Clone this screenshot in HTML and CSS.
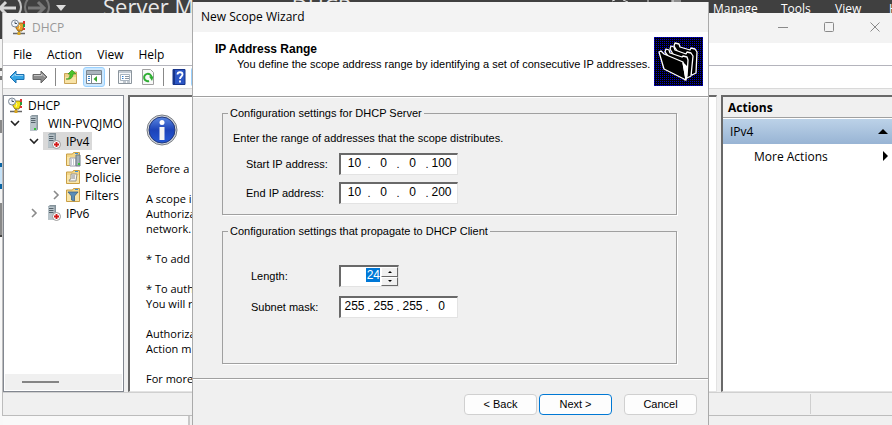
FILE: index.html
```
<!DOCTYPE html>
<html lang="en">
<head>
<meta charset="utf-8">
<title>New Scope Wizard</title>
<link rel="stylesheet" href="styles.css">
</head>
<body>
<svg class="defs" aria-hidden="true">
  <symbol id="dhcp" viewBox="0 0 16 16"><path d="M2 14.5h12M8 12v2" stroke="#666" stroke-width="1.4"/><path d="M4 4h8l1 3-2 5H7l-2-3z" fill="var(--tone)" stroke="#7a5a10" stroke-width=".8"/><path d="M7 5l2 2-1 3" stroke="#fff3a0" fill="none"/><path d="M12 2h2v3h-2zM12 9h2v2h-2z" fill="#d33"/><path d="M12 5h2v3h-2z" fill="#2a9a3a"/><rect x="6.500" y="13" width="3" height="3" fill="#d8a520"/><circle cx="4" cy="4.500" r="3.500" fill="#f2f6fb" stroke="#7b8794"/><path d="M4 2.500v2h2" stroke="#345" fill="none" stroke-width=".9"/></symbol>
  <symbol id="server" viewBox="0 0 16 16"><path d="M4 1.500L6 0h6v14.500L10 16H4z" fill="#8a979f"/><path d="M4 1.500h6.500V16H4z" fill="#b9c4ca"/><path d="M5 3.500h4.500M5 5.500h4.500M5 7.500h4.500" stroke="#55636c"/><path d="M8 13h2v2H8z" fill="#35c23a"/></symbol>
  <symbol id="serverred" viewBox="0 0 16 16"><path d="M2 1.500L4 0h6v13l-2 1.500H2z" fill="#84929a"/><path d="M2 1.500h6.500v13H2z" fill="#b9c4ca"/><path d="M3 3.500h4.500M3 5.500h4.500M3 7.500h4.500" stroke="#55636c"/><circle cx="10.500" cy="11.500" r="4" fill="#fff" stroke="#999"/><path d="M10.500 9v5M8 11.500h5" stroke="#d01818" stroke-width="1.800"/></symbol>
  <symbol id="folder" viewBox="0 0 16 16"><path d="M1.500 3h6l1-1.500h6v13h-13z" fill="#f3d689" stroke="#c99f45"/><path d="M2 6h12v8H2z" fill="#f9e5a8"/><path d="M10 2.500h3" stroke="#3c8fd8"/></symbol>
  <symbol id="chev" viewBox="0 0 10 10"><path d="M1 3l4 4 4-4" fill="none" stroke="currentColor" stroke-width="1.600"/></symbol>
  <symbol id="arrow" viewBox="0 0 16 14"><path d="M1 7l6-6v3.500h8v5H7V13z" fill="currentColor" stroke="var(--edge)"/><path d="M3 7l3.500-3v1.500H14" stroke="#fff" stroke-opacity=".5" fill="none"/></symbol>
</svg>

<div class="desktop">
  <header class="manager">
    <svg class="nav" viewBox="0 0 70 13" aria-hidden="true"><g fill="none" stroke-width="2"><circle cx="9" cy="7" r="12" stroke="#c8c8c8"/><path d="M16 8H1M6 2L0 8l6 6" stroke="#d8d8d8" stroke-width="3"/><circle cx="37" cy="7" r="12" stroke="#777"/><path d="M28 8h16M38 2l6 6-6 6" stroke="#777" stroke-width="3"/></g><path d="M56 5h10l-5 6z" fill="#ddd"/></svg>
    <div class="crumbs"><span>Server Manager</span><span>•</span><span>DHCP</span></div>
    <svg class="tools" viewBox="0 0 72 3" aria-hidden="true"><path d="M1 1l3-1M12 0l5 2M37 0v2M60 1h10M62 0v2" stroke="#ddd" fill="none"/></svg>
    <nav class="manager-menu"><a href="#">Manage</a><a href="#">Tools</a><a href="#">View</a><a href="#">Help</a></nav>
  </header>
  <div class="strip"></div>

  <section class="console">
    <header class="titlebar">
      <svg class="i16 amber"><use href="#dhcp"/></svg><span>DHCP</span>
      <svg class="winbtns" viewBox="0 0 104 12" aria-hidden="true"><path d="M1 6.500h10M93.500 1.500l9 9M102.500 1.500l-9 9" stroke="#8a8a8a" fill="none"/><rect x="47.500" y="1.500" width="9" height="9" rx="1" fill="none" stroke="#8a8a8a"/></svg>
    </header>
    <nav class="menubar"><a href="#">File</a><a href="#">Action</a><a href="#">View</a><a href="#">Help</a></nav>
    <div class="toolbar">
      <button aria-label="Back" class="blue"><svg class="i16"><use href="#arrow"/></svg></button>
      <button aria-label="Forward" class="gray"><svg class="i16 flip"><use href="#arrow"/></svg></button>
      <i class="sep"></i>
      <button aria-label="Up one level"><svg class="i16" viewBox="0 0 16 16"><path d="M1.500 4.500h5l1-1.500h6v11.500h-12z" fill="#eed187" stroke="#c9a458"/><path d="M2 8h11v6H2z" fill="#f8e3a6"/><path d="M3 10c3 0 4-2 4-5H5l4-4 4 4h-3c0 4-3 6-7 5z" fill="#4cc32a" stroke="#2f8f1a" stroke-width=".6"/></svg></button>
      <button aria-label="Show or hide console tree" class="on"><svg class="i16" viewBox="0 0 16 16"><path d="M.5 1.500h15v13H.5z" fill="#fff" stroke="#7c8790"/><path d="M1 2h14v3H1z" fill="#aab4bd"/><path d="M5.500 5v9M1 5.500h14" stroke="#7c8790"/><path d="M2 7.500h2M2 9.500h2M2 11.500h2" stroke="#3b7fc4"/><path d="M11 7v6L7.500 10z" fill="#36a52c"/></svg></button>
      <i class="sep"></i>
      <button aria-label="Properties"><svg class="i16" viewBox="0 0 16 16"><path d="M1.500 1.500h13v13h-13z" fill="#f7f9fb" stroke="#8b949c"/><path d="M2 2h12v2H2z" fill="#c3cbd3"/><path d="M3.500 5.500h9v6h-9z" fill="#fff" stroke="#a9b4bf"/><path d="M5 7.500h1.500M5 9.500h1.500" stroke="#2d7fd0"/><path d="M8 7.500h4M8 9.500h4M6 13h3M10 13h3" stroke="#8995a1"/></svg></button>
      <button aria-label="Refresh"><svg class="i16" viewBox="0 0 16 16"><path d="M2.500.5h8l3 3v12h-11z" fill="#f8f8f8" stroke="#a0a0a0"/><path d="M11.500 8A3.700 3.700 0 1 0 9 12" fill="none" stroke="#2fae33" stroke-width="2"/><path d="M9 7.500h4.500L12 12z" fill="#2fae33"/></svg></button>
      <i class="sep"></i>
      <button aria-label="Help"><svg class="i16" viewBox="0 0 16 16"><path d="M2 .5h12v15H2z" fill="#2b55c4" stroke="#17348a"/><path d="M2 1h2v14H2z" fill="#17348a"/><path d="M6.500 5.500c0-3 5-3 5 0 0 2-2.500 2-2.500 4.500M9 11.500v2" fill="none" stroke="#fff" stroke-width="1.800"/></svg></button>
      <button aria-label="Action pane" class="on"></button>
    </div>
    <div class="panes">
      <aside class="tree">
        <ul>
          <li><svg class="i16 yellow"><use href="#dhcp"/></svg><span>DHCP</span></li>
          <li class="l1"><svg class="chev"><use href="#chev"/></svg><svg class="i16"><use href="#server"/></svg><span>WIN-PVQJMO</span></li>
          <li class="l2"><svg class="chev"><use href="#chev"/></svg><b class="sel"><svg class="i16"><use href="#serverred"/></svg><span>IPv4</span></b></li>
          <li class="l3"><svg class="i16" viewBox="0 0 16 16"><use href="#folder"/><path d="M5 7h6v8H5z" fill="#fff" stroke="#99a"/><path d="M6 9h4M6 11h4M6 13h4" stroke="#8a97a5" stroke-dasharray="1"/><path d="M11 4h4v11h-4z" fill="#a3b0b8" stroke="#6c7a83"/><path d="M13 12h2v2h-2z" fill="#35c23a"/></svg><span>Server</span></li>
          <li class="l3"><svg class="i16" viewBox="0 0 16 16"><use href="#folder"/><path d="M6 5h6l-1 7H4l1-2h1z" fill="#f4f4f4" stroke="#97938a"/><path d="M7 7h3M7 9h3" stroke="#888"/></svg><span>Policie</span></li>
          <li class="l3 open"><svg class="chev shut"><use href="#chev"/></svg><svg class="i16" viewBox="0 0 16 16"><use href="#folder"/><path d="M3 5h10L9.500 9v5l-3-1V9z" fill="#5b8db8" stroke="#3b6288" stroke-width=".8"/></svg><span>Filters</span></li>
          <li class="l2"><svg class="chev shut"><use href="#chev"/></svg><b><svg class="i16"><use href="#serverred"/></svg><span>IPv6</span></b></li>
        </ul>
        <div class="scroll"><i></i></div>
      </aside>
      <main class="info">
        <svg class="badge" viewBox="0 0 32 32"><defs><linearGradient id="g" x2="0" y2="1"><stop stop-color="#5a86e0"/><stop offset=".5" stop-color="#1c43b8"/><stop offset="1" stop-color="#2559d6"/></linearGradient></defs><circle cx="16" cy="16" r="15" fill="#d5d8dc" stroke="#777b82"/><circle cx="16" cy="16" r="13" fill="url(#g)" stroke="#23387a"/><circle cx="16" cy="8.500" r="2.500" fill="#fff"/><path d="M13.500 13h5v13h-5z" fill="#f4f4f4"/></svg>
        <p>Before a</p>
        <p>A scope i<br>Authoriza<br>network.</p>
        <p>* To add</p>
        <p>* To auth<br>You will r</p>
        <p>Authoriza<br>Action m</p>
        <p>For more</p>
      </main>
      <aside class="actions">
        <h2>Actions</h2>
        <div class="group"><span>IPv4</span><svg viewBox="0 0 10 5"><path d="M0 5l5-5 5 5z"/></svg></div>
        <a class="more" href="#"><span>More Actions</span><svg viewBox="0 0 5 10"><path d="M0 0l5 5-5 5z"/></svg></a>
      </aside>
    </div>
    <footer class="status"><i></i></footer>
  </section>

  <form class="wizard">
    <header class="caption">New Scope Wizard</header>
    <div class="banner">
      <div><h1>IP Address Range</h1><p>You define the scope address range by identifying a set of consecutive IP addresses.</p></div>
      <svg viewBox="0 0 49 49" aria-hidden="true"><defs><pattern id="dots" width="2" height="2" patternUnits="userSpaceOnUse"><path d="M0 0h2v2H0z" fill="#000"/><path d="M0 0h1v1H0z" fill="#0000c8"/></pattern></defs><path d="M0 0h49v49H0z" fill="url(#dots)"/><path d="M.5.500h48v48H.5z" fill="none" stroke="#0000c0" stroke-dasharray="1"/><g fill="#000" stroke="#fff" stroke-width="1.300" stroke-linejoin="round"><path d="M20 9l1-3 4 1 1 3 10 3 1-2 4 1 2 3-1 21-4 2z"/><path d="M16 12l1-3 3 1 1 3 11 4 1-2 4 1 2 3-2 20-4 2z"/><path d="M11 15l1-3 3 1 1 3 12 4 1-1 4 1 1 3-1 16-2 4z"/><path d="M5 15l2-1 3 3 19 8 3 18-22-11z"/><path d="M29 26l4 4-1 12z" fill="#fff"/></g></svg>
    </div>
    <div class="fields">
      <fieldset class="range">
        <legend>Configuration settings for DHCP Server</legend>
        <p>Enter the range of addresses that the scope distributes.</p>
        <div class="row"><label for="s1">Start IP address:</label><div class="ip"><input id="s1" value="10"><i>.</i><input aria-label="Start octet 2" value="0"><i>.</i><input aria-label="Start octet 3" value="0"><i>.</i><input aria-label="Start octet 4" value="100"></div></div>
        <div class="row"><label for="e1">End IP address:</label><div class="ip"><input id="e1" value="10"><i>.</i><input aria-label="End octet 2" value="0"><i>.</i><input aria-label="End octet 3" value="0"><i>.</i><input aria-label="End octet 4" value="200"></div></div>
      </fieldset>
      <fieldset class="client">
        <legend>Configuration settings that propagate to DHCP Client</legend>
        <div class="row"><label for="len">Length:</label><div class="spin"><input id="len" value="24"><div class="steps"><button type="button" aria-label="Increase"><svg viewBox="0 0 4 2"><path d="M0 2l2-2 2 2z"/></svg></button><button type="button" aria-label="Decrease"><svg viewBox="0 0 4 2"><path d="M0 0l2 2 2-2z"/></svg></button></div></div></div>
        <div class="row"><label for="m1">Subnet mask:</label><div class="ip"><input id="m1" value="255"><i>.</i><input aria-label="Mask octet 2" value="255"><i>.</i><input aria-label="Mask octet 3" value="255"><i>.</i><input aria-label="Mask octet 4" value="0"></div></div>
      </fieldset>
    </div>
    <footer class="buttons"><button type="button">&lt; Back</button><button type="button" class="primary">Next &gt;</button><button type="button" class="cancel">Cancel</button></footer>
  </form>
</div>
</body>
</html>
```
FILE: styles.css
```
* { box-sizing: border-box; }
body { margin: 0; font: 12px/15px "Open Sans", "Noto Sans", sans-serif; color: #000; overflow: hidden; }
p, h1, h2, ul { margin: 0; padding: 0; font-size: inherit; }
a { color: inherit; text-decoration: none; }
svg { display: block; flex: none; }
.defs { position: absolute; width: 0; height: 0; }
.i16 { width: 16px; height: 16px; }
.desktop { position: relative; height: 100vh; overflow: hidden; background: linear-gradient(90deg, #f9f9f9 0 188px, #c8c8c8 188px 190px, #f0f0f0 190px); }

.manager { display: flex; height: 13px; background: #404040; color: #fff; overflow: hidden; }
.nav { width: 70px; height: 13px; margin-right: 33px; }
.crumbs { display: flex; gap: 9px; font-size: 22px; line-height: 12px; white-space: nowrap; color: #e8e8e8; }
.tools { width: 72px; height: 3px; margin-left: auto; }
.manager-menu { display: grid; grid-template-columns: 68px 54px 54px 12px; margin-left: 30px; margin-right: -9px; line-height: 18px; }
.strip { width: 3px; height: calc(100vh - 13px); background: linear-gradient(#404040 0 26px, #f4f4f4 26px 55px, #777 55px 58px, #f4f4f4 58px 63px, #777 63px 67px, #f4f4f4 67px 107px, #888 107px 120px, #f4f4f4 120px 150px, #0a64a4 150px 154px, #c5e2f8 154px 171px, #0a64a4 171px 176px, #f4f4f4 176px 190px, #888 190px 222px, #444 222px 224px, #f8f8f8 224px); }

.console { position: absolute; left: 2px; right: -1px; top: 13px; display: flex; flex-direction: column; height: 403px; border: 1px solid #bcbcbc; border-top: 0; background: #f0f0f0; }
.titlebar { display: flex; align-items: center; gap: 5px; height: 30px; padding: 0 11px 2px 8px; background: #f3f3f3; color: #999; }
.winbtns { width: 104px; height: 12px; margin-left: auto; }
.amber { --tone: #e79a2b; }
.yellow { --tone: #f4e313; }
.menubar { display: flex; align-items: center; gap: 15px; height: 22px; padding-left: 10px; background: #fff; }
.toolbar { display: flex; align-items: center; gap: 1px; height: 24px; padding-left: 3px; background: #fff; border-top: 1px solid #b4b4bc; border-bottom: 1px solid #d9d9d9; }
.toolbar button { display: grid; place-items: center; width: 22px; height: 20px; padding: 0; border: 1px solid transparent; border-radius: 3px; background: none; }
.toolbar .on { background: #cce8ff; border-color: #99d1ff; }
.sep { width: 1px; height: 18px; margin: 0 3px; background: #888; }
.blue { color: #35a5e5; --edge: #1b70b0; }
.gray { color: #8b8b8b; --edge: #666; }
.flip { transform: scaleX(-1); }
.panes { flex: 1; display: grid; grid-template-columns: 121px 1fr 171px; gap: 4px; padding-top: 6px; min-height: 0; }
.tree { display: flex; flex-direction: column; border: 1px solid #828790; background: #fff; overflow: hidden; padding: 0 1px 1px; }
.tree ul { list-style: none; flex: 1; }
.tree li, .tree b { display: flex; align-items: center; height: 18px; gap: 4px; font-weight: 400; white-space: nowrap; }
.tree li { padding-left: 3px; }
.tree .l1 { gap: 6px; padding-left: 5px; }
.tree .l2 { padding-left: 24px; }
.tree .l3 { padding-left: 60px; }
.tree .open { padding-left: 46px; }
.tree b { padding: 0 3px; }
.sel { background: #d9d9d9; }
.chev { width: 10px; height: 10px; color: #222; }
.shut { transform: rotate(-90deg); color: #8a8a8a; }
.scroll { height: 16px; background: #f0f0f0; padding: 7px 17px; }
.scroll i { display: block; width: 37px; height: 2px; background: #858585; }
.info { border: 1px solid #e3e3e3; border-left: 2px solid #696969; border-top: 2px solid #696969; background: #fff; padding: 17px 16px 0; overflow: hidden; white-space: nowrap; font-size: 11px; }
.info p { margin-bottom: 15px; }
.badge { width: 32px; height: 32px; margin-bottom: 15px; }
.actions { border-left: 2px solid #696969; border-top: 2px solid #696969; border-bottom: 1px solid #e3e3e3; background: #fff; }
.actions h2 { height: 21px; padding: 3px 5px; background: #f0f0f0; border-bottom: 1px solid #a0a0a0; }
.group, .more { display: flex; align-items: center; justify-content: space-between; }
.group { height: 25px; margin-top: 1px; padding: 0 4px 0 7px; background: linear-gradient(#bcd2e8, #98b4d4); }
.group svg { width: 10px; height: 5px; }
.more { height: 24px; padding: 0 4px 0 31px; }
.more svg { width: 5px; height: 10px; }
.status { height: 23px; border-top: 1px solid #d0d0d0; display: flex; justify-content: flex-end; padding: 1px 81px 1px 0; }
.status i { width: 1px; background: #cfcfcf; }

.wizard { position: absolute; left: 192px; right: 183px; top: 2px; bottom: 0; display: flex; flex-direction: column; border: 1px solid #aaa; border-width: 0 1px; background: #f0f0f0; font: 11px/15px "Liberation Sans", Roboto, sans-serif; }
.caption { height: 30px; padding: 7px 8px; background: #f3f3f3; font: 12px/16px "Open Sans", sans-serif; }
.banner { display: flex; justify-content: space-between; height: 65px; padding: 5px 5px 0 22px; background: #fff; border-bottom: 1px solid #a0a0a0; }
.banner svg { width: 49px; height: 49px; }
.banner h1 { margin-top: 4px; font: bold 12px/16px "Liberation Sans", sans-serif; }
.banner p { padding-left: 22px; white-space: nowrap; }
.fields { flex: 1; display: flex; flex-direction: column; gap: 9px; padding: 9px 31px 0 29px; border-bottom: 1px solid #a0a0a0; box-shadow: inset 0 1px #fff; }
fieldset { margin: 0; min-width: 0; border: 1px solid #a0a0a0; box-shadow: 1px 1px #fff; padding: 0 10px; }
legend { margin-left: -5px; padding: 0 2px; }
.range { height: 109px; }
.client { height: 140px; }
.range p { margin: 10px 0 7px; }
.row { display: grid; grid-template-columns: 93px 119px; height: 22px; margin: 0 0 7px 13px; align-items: center; }
.client .row { grid-template-columns: 88px 119px; margin: 0 0 9px 18px; }
.client legend { margin-bottom: 26px; }
.ip, .spin { display: flex; height: 22px; background: #fff; border: 1px solid #e3e3e3; border-top: 2px solid #696969; border-left: 2px solid #696969; padding-bottom: 2px; }
.ip { padding-left: 1px; }
.ip i { width: 4px; text-align: center; font-style: normal; line-height: 18px; }
input { width: 25px; min-width: 0; padding: 0; border: 0; background: none; font: inherit; font-size: 12px; text-align: center; }
.spin { width: 60px; padding: 0; }
.spin input { flex: 1; text-align: right; padding-bottom: 2px; }
#len { background: linear-gradient(#0078d7, #0078d7) right top 1px / 14px 14px no-repeat; color: #fff; }
.steps { display: grid; grid-template-rows: 1fr 1fr; width: 17px; margin-left: 1px; }
.steps button { display: grid; place-items: center; padding: 0; background: #f0f0f0; border: 1px solid #fff; border-right-color: #696969; border-bottom-color: #696969; }
.steps svg { width: 4px; height: 2px; }
.buttons { display: flex; justify-content: flex-end; gap: 2px; height: 46px; padding: 15px 11px 9px 0; box-shadow: inset 0 1px #fff; }
.buttons button { width: 73px; height: 21px; padding: 0; border: 1px solid #d0d0d0; border-radius: 4px; background: #fdfdfd; font: inherit; }
.buttons .primary { border-color: #0078d4; }
.buttons .cancel { margin-left: 10px; }
```
